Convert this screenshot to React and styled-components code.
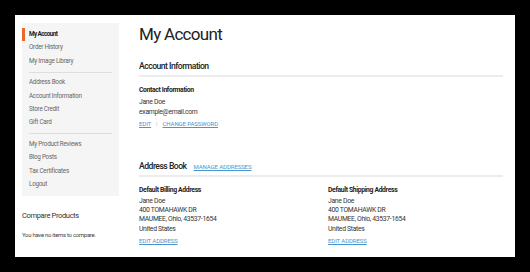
import React from "react";
import styled, { createGlobalStyle } from "styled-components";

const Global = createGlobalStyle`
  html, body {
    margin: 0;
    background: #000;
  }
  body {
    font-family: Roboto, "Liberation Sans", sans-serif;
    color: #333;
  }
`;

const Frame = styled.div`
  padding: 15px;
  width: 500px;
`;

const Panel = styled.div`
  background: #fff;
  height: 242px;
  box-sizing: border-box;
  padding: 8px 12px 0 7px;
  display: flex;
  gap: 20px;
  overflow: hidden;
`;

const Sidebar = styled.aside`
  width: 97px;
  flex: none;
`;

const Nav = styled.nav`
  background: #f5f5f5;
  padding: 5px 0 4.6px;
`;

const NavItem = styled.div`
  height: 13.4px;
  line-height: 13.4px;
  font-size: 6.3px;
  letter-spacing: ${(p) => (p.$active ? "-0.55px" : "-0.25px")};
  color: ${(p) => (p.$active ? "#222" : "#666")};
  font-weight: ${(p) => (p.$active ? 700 : 400)};
  padding-left: ${(p) => (p.$active ? "4px" : "7px")};
  border-left: ${(p) => (p.$active ? "3px solid #e8692d" : "none")};
  white-space: nowrap;
`;

const NavDivider = styled.div`
  height: 1px;
  background: #dedede;
  margin: 3.5px 7px;
`;

const CompareTitle = styled.div`
  margin-top: 14px;
  font-size: 7.5px;
  letter-spacing: -0.35px;
  line-height: 12px;
  color: #333;
`;

const CompareText = styled.div`
  margin-top: 8px;
  font-size: 6px;
  letter-spacing: -0.3px;
  line-height: 9px;
  color: #444;
`;

const Main = styled.main`
  flex: 1;
`;

const Title = styled.h1`
  margin: 0;
  font-size: 17px;
  letter-spacing: -0.7px;
  line-height: 23px;
  font-weight: 400;
  color: #222;
`;

const SectionHead = styled.div`
  margin-top: ${(p) => p.$top}px;
  display: flex;
  align-items: baseline;
  gap: 7px;
  padding-bottom: 2px;
  border-bottom: 2px solid #ececec;
`;

const SectionTitle = styled.h2`
  margin: 0;
  font-size: 8.6px;
  letter-spacing: -0.5px;
  line-height: 14px;
  font-weight: 500;
  color: #222;
`;

const Link = styled.a`
  color: #4a95cf;
  text-decoration: underline;
  text-transform: uppercase;
  font-size: 6px;
  letter-spacing: -0.1px;
  cursor: pointer;
`;

const BoxTitle = styled.div`
  margin-top: 8px;
  font-size: 6.8px;
  letter-spacing: -0.35px;
  line-height: 10px;
  font-weight: 700;
  color: #222;
`;

const Lines = styled.div`
  margin-top: 2px;
  font-size: 6.8px;
  letter-spacing: -0.3px;
  line-height: ${(p) => p.$lh || 10}px;
  color: #333;
`;

const Actions = styled.div`
  margin-top: 1.5px;
  line-height: 10px;
  display: flex;
  align-items: baseline;
  gap: 5px;
`;

const Sep = styled.span`
  color: #bbb;
  font-size: 6px;
`;

const Columns = styled.div`
  display: grid;
  grid-template-columns: 189px 1fr;
`;

function AddressBox({ title }) {
  return (
    <div>
      <BoxTitle>{title}</BoxTitle>
      <Lines $lh={9.4}>
        Jane Doe
        <br />
        400 TOMAHAWK DR
        <br />
        MAUMEE, Ohio, 43537-1654
        <br />
        United States
      </Lines>
      <Actions>
        <Link>Edit Address</Link>
      </Actions>
    </div>
  );
}

export default function App() {
  return (
    <Frame>
      <Global />
      <Panel>
        <Sidebar>
          <Nav>
            <NavItem $active>My Account</NavItem>
            <NavItem>Order History</NavItem>
            <NavItem>My Image Library</NavItem>
            <NavDivider />
            <NavItem>Address Book</NavItem>
            <NavItem>Account Information</NavItem>
            <NavItem>Store Credit</NavItem>
            <NavItem>Gift Card</NavItem>
            <NavDivider />
            <NavItem>My Product Reviews</NavItem>
            <NavItem>Blog Posts</NavItem>
            <NavItem>Tax Certificates</NavItem>
            <NavItem>Logout</NavItem>
          </Nav>
          <CompareTitle>Compare Products</CompareTitle>
          <CompareText>You have no items to compare.</CompareText>
        </Sidebar>
        <Main>
          <Title>My Account</Title>
          <SectionHead $top={13}>
            <SectionTitle>Account Information</SectionTitle>
          </SectionHead>
          <BoxTitle>Contact Information</BoxTitle>
          <Lines>
            Jane Doe
            <br />
            example@email.com
          </Lines>
          <Actions>
            <Link>Edit</Link>
            <Sep>|</Sep>
            <Link>Change Password</Link>
          </Actions>
          <SectionHead $top={30}>
            <SectionTitle>Address Book</SectionTitle>
            <Link>Manage Addresses</Link>
          </SectionHead>
          <Columns>
            <AddressBox title="Default Billing Address" />
            <AddressBox title="Default Shipping Address" />
          </Columns>
        </Main>
      </Panel>
    </Frame>
  );
}
